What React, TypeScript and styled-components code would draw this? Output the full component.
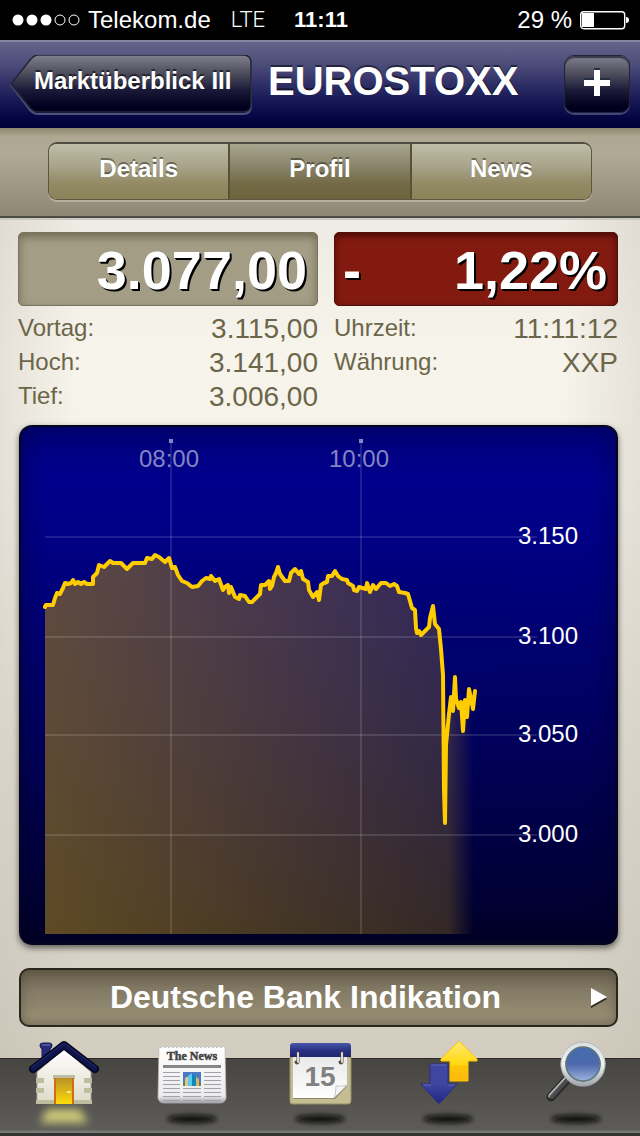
import React from "react";
import styled, { createGlobalStyle, css } from "styled-components";

const GlobalStyle = createGlobalStyle`
  *, *::before, *::after { box-sizing: border-box; }
  body {
    margin: 0;
    background: #000;
    font-family: "Liberation Sans", Arial, Helvetica, sans-serif;
    color: #fff;
  }
  button { font-family: inherit; color: inherit; border: 0; padding: 0; cursor: pointer; }
  a { color: inherit; text-decoration: none; }
  h1, h2, p, dl, dd, dt { margin: 0; }
  svg { display: block; }
`;

const Screen = styled.div`
  display: flex;
  flex-direction: column;
  min-height: 100vh;
`;

/* ---------- Status bar ---------- */

const StatusBar = styled.div`
  display: grid;
  grid-template-columns: 1fr auto 1fr;
  align-items: center;
  height: 40px;
  padding: 0 10px 0 12px;
  background: #000;
  font-size: 24px;
  line-height: 40px;
`;

const StatusGroup = styled.div<{ $end?: boolean }>`
  display: flex;
  align-items: center;
  justify-content: ${(p) => (p.$end ? "flex-end" : "flex-start")};
  gap: 8px;
`;

const Network = styled.span`
  margin-left: 12px;
  font-family: Roboto, "Liberation Sans", sans-serif;
  font-weight: 300;
  font-size: 22px;
`;

const Clock = styled.time`
  font-size: 22px;
  font-weight: 700;
`;

/* ---------- Navigation bar ---------- */

const NavBar = styled.header`
  display: flex;
  align-items: center;
  gap: 16px;
  height: 88px;
  padding: 0 10px;
  border-top: 2px solid #85859f;
  background: linear-gradient(#64648c, #4a4a78 28%, #1a1a58 66%, #01013e 92%, #000038);
`;

const BackButton = styled.button`
  position: relative;
  display: flex;
  flex: none;
  width: 242px;
  height: 60px;
  background: none;
  font-size: 24px;
  font-weight: 700;
  line-height: 52px;
  text-shadow: 0 -2px 0 rgba(0, 0, 0, 0.55);
`;

const BackShape = styled.svg`
  position: absolute;
  inset: 0;
`;

const BackLabel = styled.span`
  position: relative;
  padding-left: 24px;
`;

const Title = styled.h1`
  flex: 1;
  font-size: 40px;
  line-height: 80px;
  padding-bottom: 8px;
  font-weight: 700;
  white-space: nowrap;
  text-shadow: 0 -2px 0 rgba(0, 0, 0, 0.5);
`;

const AddButton = styled.button`
  display: flex;
  justify-content: center;
  width: 66px;
  height: 58px;
  margin-bottom: 2px;
  padding-top: 12px;
  border: 1px solid #24243a;
  border-radius: 10px;
  background: linear-gradient(#80808f, #50505f 30%, #1a1a38 62%, #00001e 92%);
  box-shadow: inset 0 2px 1px rgba(10, 10, 30, 0.6), 0 2px 0 #45457a;
`;

/* ---------- Segmented control ---------- */

const SegmentBar = styled.nav`
  height: 90px;
  padding: 14px 48px 16px;
  border-bottom: 2px solid #4b4c46;
  background: linear-gradient(#8d866f, #aea791 10%, #b0a994 30%, #8e8774);
`;

const Segments = styled.div`
  display: flex;
  height: 58px;
  overflow: hidden;
  border: 1px solid #5b583f;
  border-top: 2px solid #4e4c43;
  border-radius: 9px;
  box-shadow: 0 2px 0 #b5b09f;
`;

const Segment = styled.button<{ $active?: boolean }>`
  flex: 1;
  height: 55px;
  padding-bottom: 6px;
  font-size: 24px;
  font-weight: 700;
  line-height: 48px;
  text-shadow: 0 -2px 0 rgba(0, 0, 0, 0.4);
  background: ${(p) =>
    p.$active
      ? "linear-gradient(#aaa58f, #89846a 40%, #746b46 72%, #6c633d)"
      : "linear-gradient(#c1bda7, #a7a289 42%, #918962 74%, #8b825a)"};
  & + & {
    border-left: 2px solid #56523a;
  }
`;

/* ---------- Quote ---------- */

const Content = styled.main`
  flex: 1;
  display: flex;
  flex-direction: column;
  padding: 12px 22px 31px 18px;
  border-top: 2px solid #cbc8bf;
  background:
    linear-gradient(90deg, rgba(190, 184, 172, 0.3), rgba(190, 184, 172, 0) 12%, rgba(190, 184, 172, 0) 88%, rgba(190, 184, 172, 0.3)),
    linear-gradient(#eeebe4, #f7f4ec 16%, #f5f2ea 30%, #dfdbd0 70%, #d3cdc0);
`;

const Columns = styled.div`
  display: grid;
  grid-template-columns: 300fr 284fr;
  gap: 16px;
`;

const Price = styled.p<{ $tone: "neutral" | "loss" }>`
  display: flex;
  justify-content: space-between;
  height: 74px;
  padding: 0 10px 0 8px;
  border-radius: 5px;
  font-size: 54px;
  font-weight: 700;
  line-height: 74px;
  text-shadow: 2px 2px 0 #000, 1px 1px 0 #000;
  ${(p) =>
    p.$tone === "loss"
      ? css`
          border: 1px solid #521009;
          background: #831a10;
          box-shadow: inset 0 3px 6px rgba(50, 0, 0, 0.7);
        `
      : css`
          border: 1px solid #79745d;
          background: #a49d86;
          box-shadow: inset 0 4px 8px rgba(80, 74, 50, 0.6);
        `}
`;

const Facts = styled.dl`
  padding-top: 6px;
  color: #6b6649;
`;

const Fact = styled.div`
  display: flex;
  justify-content: space-between;
  height: 34px;
  font-size: 24px;
  line-height: 32px;
`;

const FactValue = styled.dd`
  font-size: 28px;
  line-height: 34px;
`;

/* ---------- Chart ---------- */

const ChartPanel = styled.figure`
  margin: 11px 0 0 1px;
  overflow: hidden;
  border: 2px solid #05051e;
  border-radius: 13px;
  background: linear-gradient(#00007e, #00008c 10%, #000084 22%, #00005c 60%, #000030 94%, #000026);
  box-shadow: 0 3px 6px rgba(0, 0, 0, 0.55), inset 0 0 28px rgba(0, 0, 30, 0.4);
  svg { width: 100%; height: auto; }
`;

const points =
  "45,607 46,605 53,605 55,598 57,593 60,594 63,588 65,583 68,584 71,583 73,580 75,584 78,582 81,584 84,582 87,584 93,584 93,577 97,573 99,565 104,567 110,561 113,563 121,563 127,569 133,563 145,563 147,558 152,559 155,555 159,557 165,562 169,558 172,568 175,567 178,575 182,581 187,583 192,587 198,586 202,581 206,578 210,579 211,576 215,581 219,579 223,590 225,587 228,585 229,593 231,587 235,597 239,599 240,595 245,596 249,602 252,602 257,597 260,594 261,585 265,585 269,581 270,589 272,586 274,577 276,573 278,567 280,574 285,581 289,581 291,573 295,569 299,574 301,571 303,579 308,582 309,590 313,597 317,592 319,600 321,585 324,583 327,582 328,576 332,576 335,571 338,576 342,579 347,580 348,583 353,586 354,590 357,591 359,587 366,589 367,583 370,592 373,585 376,589 381,583 386,583 390,586 394,584 397,586 399,592 405,593 408,594 412,608 415,610 416,628 417,633 419,631 421,635 424,632 429,627 430,618 433,606 435,624 439,629 441,649 443,675 444,790 445,823 446,745 449,714 451,697 453,711 455,677 456,699 459,708 461,702 463,731 465,700 467,717 469,689 473,709 475,691";

const gridRows = [
  { y: 537, label: "3.150" },
  { y: 637, label: "3.100" },
  { y: 735, label: "3.050" },
  { y: 835, label: "3.000" },
];

const gridColumns = [
  { x: 171, label: "08:00" },
  { x: 361, label: "10:00" },
];

const Chart = () => (
  <ChartPanel aria-label="Kursverlauf">
    <svg viewBox="21 427 595 516" fontFamily="Liberation Sans, Arial, sans-serif" fontSize="24">
      <defs>
        <linearGradient id="areaFill" gradientUnits="userSpaceOnUse" x1="44" y1="0" x2="474" y2="0">
          <stop offset="0" stopColor="#917220" stopOpacity="0.65" />
          <stop offset="0.94" stopColor="#917220" stopOpacity="0.35" />
          <stop offset="1" stopColor="#917220" stopOpacity="0" />
        </linearGradient>
      </defs>
      <polygon points={`45,934 ${points} 475,934`} fill="url(#areaFill)" />
      <g stroke="#fff" strokeOpacity="0.12" strokeWidth="2">
        {gridRows.map((r) => (
          <line key={r.y} x1="45" x2="537" y1={r.y} y2={r.y} />
        ))}
        {gridColumns.map((c) => (
          <line key={c.x} x1={c.x} x2={c.x} y1="443" y2="934" />
        ))}
      </g>
      <g fill="#8585c4" textAnchor="middle">
        {gridColumns.map((c) => (
          <React.Fragment key={c.x}>
            <rect x={c.x - 2} y="439" width="4" height="4" />
            <text x={c.x - 2} y="467">{c.label}</text>
          </React.Fragment>
        ))}
      </g>
      <g fill="#fff">
        {gridRows.map((r) => (
          <text key={r.y} x="518" y={r.y + 7}>{r.label}</text>
        ))}
      </g>
      <polyline points={points} fill="none" stroke="#ffcc00" strokeWidth="4" strokeLinejoin="round" strokeLinecap="round" />
    </svg>
  </ChartPanel>
);

const LinkButton = styled.button`
  display: flex;
  align-items: center;
  height: 59px;
  margin: 23px 0 0 1px;
  padding: 0 8px 0 0;
  border: 2px solid #29261d;
  border-radius: 10px;
  background: linear-gradient(#675e4d, #827a64 36%, #958c73 82%, #958c73);
  box-shadow: inset 0 0 12px rgba(70, 62, 45, 0.5);
  font-size: 32px;
  font-weight: 700;
`;

const LinkLabel = styled.span`
  flex: 1;
  text-align: center;
`;

/* ---------- Tab bar ---------- */

const TabBar = styled.nav`
  display: grid;
  grid-template-columns: repeat(5, 1fr);
  height: 78px;
  border-top: 1px solid #2c2b28;
  border-bottom: 3px solid #333;
  background: linear-gradient(#464541, #5c5b57 92%, #5e5d59 96%, #7a7975 98%);
`;

const Tab = styled.a`
  display: flex;
  justify-content: center;
  margin-top: -25px;
`;

const Shadow = ({ id }: { id: string }) => (
  <>
    <defs>
      <filter id={id} x="-30%" y="-150%" width="160%" height="400%">
        <feGaussianBlur stdDeviation="2.5" />
      </filter>
    </defs>
    <ellipse cx="64" cy="85" rx="25" ry="4" fill="#0c0c0a" filter={`url(#${id})`} />
  </>
);

const TabIcon = ({ children }: { children: React.ReactNode }) => (
  <svg width="128" height="102" viewBox="0 0 128 102" aria-hidden="true">
    {children}
  </svg>
);

const HomeIcon = () => (
  <TabIcon>
    <defs>
      <linearGradient id="wall" x1="0" y1="0" x2="0" y2="1">
        <stop offset="0" stopColor="#fff" />
        <stop offset="1" stopColor="#dedcc9" />
      </linearGradient>
      <linearGradient id="door" x1="0" y1="0" x2="0" y2="1">
        <stop offset="0" stopColor="#b99124" />
        <stop offset="1" stopColor="#ffdc0c" />
      </linearGradient>
      <filter id="homeGlow" x="-40%" y="-150%" width="180%" height="400%">
        <feGaussianBlur stdDeviation="4" />
      </filter>
    </defs>
    <path d="M47 75 H80 L88 89 H40 Z" fill="#cbc97a" filter="url(#homeGlow)" />
    <path d="M42 28 V15 Q40 14 40 11 Q40 9 43 9 H49 Q52 9 52 11 Q52 14 50 15 V22 Z" fill="#262a78" stroke="#161a50" />
    <path d="M42 11 H50" stroke="#4c539e" strokeWidth="2" />
    <path d="M64 15 L91 38 V68 H37 V38 Z" fill="url(#wall)" stroke="#aaa68c" />
    <g fill="#c0bc9f">
      <rect x="36" y="44" width="8" height="5" />
      <rect x="36" y="54" width="8" height="5" />
      <rect x="36" y="66" width="19" height="4" />
      <rect x="84" y="44" width="8" height="5" />
      <rect x="84" y="54" width="8" height="5" />
      <rect x="73" y="66" width="19" height="4" />
      <rect x="53" y="41" width="22" height="4" />
    </g>
    <rect x="54" y="44" width="20" height="26" fill="#cf6e16" />
    <rect x="56" y="44" width="16" height="26" fill="url(#door)" />
    <path d="M67 58 H71" stroke="#fff8c5" strokeWidth="1.5" />
    <path d="M33 35 L64 11 L95 35" fill="none" stroke="#050822" strokeWidth="8" strokeLinecap="round" strokeLinejoin="round" />
    <path d="M33 35 L64 11 L95 35" fill="none" stroke="#10144f" strokeWidth="5" strokeLinecap="round" strokeLinejoin="round" />
    <path d="M32 33 L64 9 L96 33" fill="none" stroke="#262b6a" strokeWidth="1" strokeLinecap="round" />
  </TabIcon>
);

const NewsIcon = () => (
  <TabIcon>
    <defs>
      <linearGradient id="paper" x1="0" y1="0" x2="0" y2="1">
        <stop offset="0" stopColor="#fff" />
        <stop offset="0.88" stopColor="#ebebee" />
        <stop offset="1" stopColor="#9c9ca3" />
      </linearGradient>
    </defs>
    <Shadow id="newsShadow" />
    <path
      d="M31 12 L33 14 L35 12 L37 14 L39 12 L41 14 L43 12 L45 14 L47 12 L49 14 L51 12 L53 14 L55 12 L57 14 L59 12 L61 14 L63 12 L65 14 L67 12 L69 14 L71 12 L73 14 L75 12 L77 14 L79 12 L81 14 L83 12 L85 14 L87 12 L89 14 L91 12 L93 14 L95 12 L97 13 L98 64 Q97 69 92 69 H36 Q31 69 30 64 Z"
      fill="url(#paper)"
      stroke="#b9b9bd"
      strokeWidth="0.7"
    />
    <text x="64" y="26" textAnchor="middle" fontFamily="Liberation Serif, serif" fontWeight="700" fontSize="12" fill="#444" stroke="#444" strokeWidth="0.5">
      The News
    </text>
    <rect x="35" y="31" width="58" height="3" fill="#85858a" />
    <g stroke="#a2a2a6">
      {[38.5, 42.5, 46.5, 50.5, 54.5, 58.5, 62.5, 66.5].map((y) => (
        <path key={y} d={y < 54 ? `M35 ${y} H52 M76 ${y} H93` : `M35 ${y} H52 M55 ${y} H73 M76 ${y} H93`} />
      ))}
    </g>
    <rect x="55" y="38" width="18" height="14" fill="#4c79c6" />
    <path d="M55 52 V49 Q58 46 60 49 L62 45 L66 50 L70 45 L73 50 V52 Z" fill="#568a40" />
    <path d="M57 52 V44 L61 42 V52 Z" fill="#dcc78c" />
    <path d="M60 52 V42 L64 39 V52 Z" fill="#5ccbee" />
    <path d="M64 39 L68 42 V52 H64 Z" fill="#1585b8" />
    <path d="M68 43 L71 45 V52 H68 Z" fill="#d6b46d" />
  </TabIcon>
);

const CalendarIcon = () => (
  <TabIcon>
    <defs>
      <linearGradient id="calTop" x1="0" y1="0" x2="0" y2="1">
        <stop offset="0" stopColor="#4858a8" />
        <stop offset="0.5" stopColor="#2a3284" />
        <stop offset="1" stopColor="#20266c" />
      </linearGradient>
      <linearGradient id="sheet" x1="0" y1="0" x2="0" y2="1">
        <stop offset="0" stopColor="#e9e9e9" />
        <stop offset="1" stopColor="#fff" />
      </linearGradient>
    </defs>
    <Shadow id="calShadow" />
    <path d="M34 23 H95 V67 Q95 70 92 70 H36 Q34 70 34 68 Z" fill="#c4bc92" stroke="#958e66" />
    <path d="M37 23 H91 V52 L79 65 H37 Z" fill="#8f896c" />
    <path d="M37 23 H91 V51 L78 64 H37 Z" fill="url(#sheet)" />
    <path d="M91 51 Q86 53 80 52 Q80 60 78 64 Z" fill="#f4f4f4" stroke="#bbb" strokeWidth="0.8" />
    <path d="M34 23 V12 Q34 9 37 9 H92 Q95 9 95 12 V23 Z" fill="url(#calTop)" />
    <text x="64" y="52" textAnchor="middle" fontFamily="Liberation Sans, sans-serif" fontWeight="700" fontSize="28" fill="#808080">
      15
    </text>
    <g fill="none" strokeLinecap="round">
      <path d="M42 19 V28 Q41 30 40 28 M86 19 V28 Q85 30 84 28" stroke="#51483f" strokeWidth="3" />
      <path d="M42 19 V28 M86 19 V28" stroke="#ddd8d1" strokeWidth="2" />
    </g>
  </TabIcon>
);

const TradeIcon = () => (
  <TabIcon>
    <defs>
      <linearGradient id="up" x1="0" y1="0" x2="0" y2="1">
        <stop offset="0" stopColor="#ffe873" />
        <stop offset="0.6" stopColor="#ffd90e" />
        <stop offset="0.62" stopColor="#ffc40b" />
        <stop offset="1" stopColor="#ffb90e" />
      </linearGradient>
      <linearGradient id="down" x1="0" y1="0" x2="0" y2="1">
        <stop offset="0" stopColor="#3f46a0" />
        <stop offset="0.5" stopColor="#3e469d" />
        <stop offset="1" stopColor="#22288a" />
      </linearGradient>
    </defs>
    <Shadow id="tradeShadow" />
    <path d="M75 7 L93 25 V27 H84 V47 H66 V27 H57 V25 Z" fill="url(#up)" stroke="#ffc400" strokeLinejoin="round" />
    <path d="M46 30 H64 V50 H73 L56 69 H54 L37 50 H46 Z" fill="url(#down)" stroke="#292f82" strokeLinejoin="round" />
    <path d="M47 31 H63 M39 51 H47 M64 51 H71" stroke="#646bb8" />
  </TabIcon>
);

const SearchIcon = () => (
  <TabIcon>
    <defs>
      <linearGradient id="lens" x1="0" y1="0" x2="0" y2="1">
        <stop offset="0" stopColor="#426cae" />
        <stop offset="0.5" stopColor="#4e68ac" />
        <stop offset="1" stopColor="#9cb2de" />
      </linearGradient>
      <linearGradient id="rim" x1="0" y1="0" x2="0" y2="1">
        <stop offset="0" stopColor="#dce0e2" />
        <stop offset="0.5" stopColor="#eff2f4" />
        <stop offset="1" stopColor="#a6acb3" />
      </linearGradient>
    </defs>
    <Shadow id="searchShadow" />
    <path d="M56 44 L39 63" stroke="#28282a" strokeWidth="9" strokeLinecap="round" />
    <path d="M55 43 L38 62" stroke="#8c8c90" strokeWidth="4" strokeLinecap="round" />
    <path d="M56 45 L40 63" stroke="#4b4b4e" strokeWidth="4" strokeLinecap="round" />
    <path d="M54 43 L37 61" stroke="#d0d0d0" strokeWidth="1" />
    <circle cx="71" cy="30" r="20" fill="none" stroke="url(#rim)" strokeWidth="5" />
    <circle cx="71" cy="30" r="17" fill="url(#lens)" stroke="#5d787d" strokeWidth="1.5" />
    <circle cx="71" cy="30" r="22" fill="none" stroke="#8e9396" strokeWidth="0.6" />
  </TabIcon>
);

const tabs = [
  { name: "Start", icon: <HomeIcon /> },
  { name: "Nachrichten", icon: <NewsIcon /> },
  { name: "Kalender", icon: <CalendarIcon /> },
  { name: "Handel", icon: <TradeIcon /> },
  { name: "Suche", icon: <SearchIcon /> },
];

const FactList = ({ items }: { items: [string, string][] }) => (
  <Facts>
    {items.map(([label, value]) => (
      <Fact key={label}>
        <dt>{label}</dt>
        <FactValue>{value}</FactValue>
      </Fact>
    ))}
  </Facts>
);

export default function App() {
  return (
    <Screen>
      <GlobalStyle />
      <StatusBar>
        <StatusGroup>
          <svg width="68" height="12" viewBox="0 0 68 12" aria-hidden="true">
            {[0, 1, 2, 3, 4].map((i) => (
              <circle key={i} cx={6 + i * 14} cy="6" r={i < 3 ? 5.5 : 5} fill={i < 3 ? "#fff" : "none"} stroke="#fff" strokeWidth={i < 3 ? 0 : 1} />
            ))}
          </svg>
          <span>Telekom.de</span>
          <Network>LTE</Network>
        </StatusGroup>
        <Clock>11:11</Clock>
        <StatusGroup $end>
          <span>29 %</span>
          <svg width="50" height="20" viewBox="0 0 50 20" aria-hidden="true">
            <rect x="0.7" y="1.7" width="44" height="17" rx="3" fill="none" stroke="#fff" strokeWidth="1.4" />
            <rect x="2" y="3" width="12" height="14" fill="#fff" />
            <path d="M46 7 Q49 7 49 10 Q49 13 46 13 Z" fill="#fff" />
          </svg>
        </StatusGroup>
      </StatusBar>

      <NavBar>
        <BackButton>
          <BackShape width="244" height="62" viewBox="0 0 244 62" aria-hidden="true">
            <defs>
              <linearGradient id="backFill" x1="0" y1="0" x2="0" y2="1">
                <stop offset="0" stopColor="#80808f" />
                <stop offset="0.3" stopColor="#50505f" />
                <stop offset="0.62" stopColor="#1a1a38" />
                <stop offset="0.92" stopColor="#00001e" />
              </linearGradient>
            </defs>
            <path d="M1 30 L20 6 Q24 2 28 2 H233 Q241 2 241 10 V51 Q241 59 233 59 H28 Q24 59 20 55 Z" fill="none" stroke="#50507f" strokeWidth="2" />
            <path d="M1 29 L20 5 Q24 0 28 0 H233 Q241 0 241 8 V49 Q241 57 233 57 H28 Q24 57 20 53 Z" fill="url(#backFill)" stroke="#242436" strokeWidth="1.5" />
          </BackShape>
          <BackLabel>Marktüberblick III</BackLabel>
        </BackButton>
        <Title>EUROSTOXX</Title>
        <AddButton aria-label="Hinzufügen">
          <svg width="28" height="30" viewBox="0 0 28 30" aria-hidden="true">
            <path d="M1 13 H27 M14 0 V26" stroke="#24303f" strokeWidth="6" />
            <path d="M1 15 H27 M14 2 V28" stroke="#fff" strokeWidth="6" />
          </svg>
        </AddButton>
      </NavBar>

      <SegmentBar>
        <Segments>
          <Segment>Details</Segment>
          <Segment $active aria-pressed="true">Profil</Segment>
          <Segment>News</Segment>
        </Segments>
      </SegmentBar>

      <Content>
        <Columns>
          <section>
            <Price $tone="neutral">
              <span />
              <span>3.077,00</span>
            </Price>
            <FactList items={[["Vortag:", "3.115,00"], ["Hoch:", "3.141,00"], ["Tief:", "3.006,00"]]} />
          </section>
          <section>
            <Price $tone="loss">
              <span>-</span>
              <span>1,22%</span>
            </Price>
            <FactList items={[["Uhrzeit:", "11:11:12"], ["Währung:", "XXP"]]} />
          </section>
        </Columns>

        <Chart />

        <LinkButton>
          <LinkLabel>Deutsche Bank Indikation</LinkLabel>
          <svg width="18" height="22" viewBox="0 0 18 22" aria-hidden="true">
            <path d="M1 3 L17 12 L1 21 Z" fill="#292519" />
            <path d="M1 1 L17 10 L1 19 Z" fill="#fff" />
          </svg>
        </LinkButton>
      </Content>

      <TabBar>
        {tabs.map((t) => (
          <Tab key={t.name} href="#" aria-label={t.name}>
            {t.icon}
          </Tab>
        ))}
      </TabBar>
    </Screen>
  );
}
